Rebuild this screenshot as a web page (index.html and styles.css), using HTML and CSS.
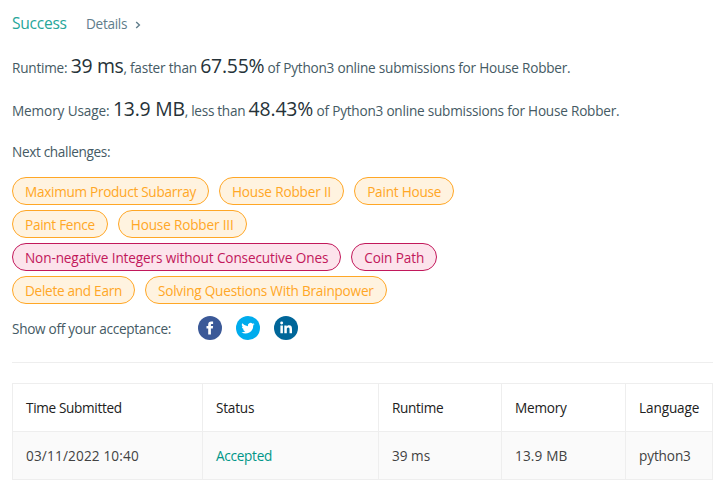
FILE: index.html
```
<!DOCTYPE html>
<html lang="en">
<head>
<meta charset="utf-8">
<title>Submission result</title>
<link rel="stylesheet" href="styles.css">
</head>
<body>
<main class="result">
  <header class="heading">
    <span class="success">Success</span>
    <a class="details">Details</a>
    <svg class="chevron" viewBox="0 0 6 8"><path d="M1.2 1 4.4 4 1.2 7"/></svg>
  </header>
  <p class="stat"><span>Runtime: </span><b class="tight">39 ms</b><span>, faster than </span><b>67.55%</b><span> of Python3 online submissions for House Robber.</span></p>
  <p class="stat"><span class="loose">Memory Usage: </span><b>13.9 MB</b><span class="mid">, less than </span><b class="loose">48.43%</b><span> of Python3 online submissions for House Robber.</span></p>
  <p class="next tight">Next challenges:</p>
  <section class="challenges">
    <div class="row"><a class="pill mid">Maximum Product Subarray</a><a class="pill near">House Robber II</a><a class="pill">Paint House</a></div>
    <div class="row"><a class="pill mid">Paint Fence</a><a class="pill near">House Robber III</a></div>
    <div class="row"><a class="pill hard loose">Non-negative Integers without Consecutive Ones</a><a class="pill hard loose">Coin Path</a></div>
    <div class="row"><a class="pill mid">Delete and Earn</a><a class="pill">Solving Questions With Brainpower</a></div>
  </section>
  <div class="share">
    <span class="share-label mid">Show off your acceptance:</span>
    <svg class="social" viewBox="0 0 24 24"><circle cx="12" cy="12" r="12" fill="#3b5998"/><path fill="#fff" d="M10.2 18.5v-6H8.500v-2.400h1.700V8.600c0-2 1.100-3 3-3h1.900V8h-1.200c-.8 0-1 .4-1 1.100v1h2.200l-.3 2.400h-1.900v6z"/></svg>
    <svg class="social" viewBox="0 0 24 24"><circle cx="12" cy="12" r="12" fill="#00aced"/><path fill="#fff" d="M18.6 8.100c-.5.2-1 .4-1.600.4.6-.3 1-.9 1.200-1.500-.5.3-1.100.5-1.700.7a2.700 2.700 0 0 0-4.600 2.500A7.700 7.700 0 0 1 6.300 7.300a2.700 2.700 0 0 0 .8 3.600c-.4 0-.8-.1-1.200-.3 0 1.300.9 2.400 2.200 2.700-.4.1-.8.1-1.200 0 .3 1.100 1.300 1.900 2.500 1.900a5.400 5.400 0 0 1-4 1.100 7.700 7.700 0 0 0 11.800-6.800c.6-.4 1-.8 1.400-1.400z"/></svg>
    <svg class="social" viewBox="0 0 24 24"><circle cx="12" cy="12" r="12" fill="#006699"/><path fill="#fff" d="M6.400 9.500h2.500v7.800H6.400zM10.300 9.500h2.400v1.100c.5-.8 1.300-1.300 2.400-1.300 2.400 0 2.900 1.500 2.900 3.600v4.400h-2.500v-3.900c0-1 0-2-1.300-2s-1.400 1-1.400 2v3.900h-2.500z"/><circle cx="7.650" cy="7" r="1.450" fill="#fff"/></svg>
  </div>
  <table class="submissions">
    <thead><tr><th class="c-time tight">Time Submitted</th><th class="c-status">Status</th><th class="c-runtime tight">Runtime</th><th class="c-memory">Memory</th><th class="loose">Language</th></tr></thead>
    <tbody><tr><td class="wide">03/11/2022 10:40</td><td class="accepted mid">Accepted</td><td class="flat">39 ms</td><td class="wide">13.9 MB</td><td class="loose">python3</td></tr></tbody>
  </table>
</main>
</body>
</html>
```
FILE: styles.css
```
* { box-sizing: border-box; }
body {
  margin: 0;
  background: #fff;
  color: #455a64;
  font: 13.6px/20px "Open Sans", "Noto Sans", sans-serif;
  letter-spacing: -.22px;
}
.result { padding: 11px 12px 0; }
.mid { letter-spacing: -.29px; }
.near { letter-spacing: -.17px; }
.tight { letter-spacing: -.34px; }
.loose { letter-spacing: -.12px; }
.flat { letter-spacing: 0; }
.wide { letter-spacing: .16px; }

.heading { display: flex; align-items: baseline; height: 24px; line-height: 24px; }
.success { width: 74px; color: #26a69a; font-size: 15.6px; letter-spacing: -.27px; }
.details { width: 49px; color: #607d8b; letter-spacing: -.31px; }
.chevron { width: 6px; height: 8px; fill: none; stroke: #607d8b; stroke-width: 1.4; }

.stat { height: 43px; margin: 0; line-height: 43px; white-space: pre; }
.heading + .stat { margin-top: 9px; }
.stat b { color: #263238; font-size: 19.4px; font-weight: 400; }
.next { margin: 12px 0 15px; }

.challenges { display: grid; gap: 5px; }
.row { display: flex; gap: 10px; }
.pill {
  height: 28px;
  padding: 0 12px;
  border: 1px solid #ffa726;
  border-radius: 14px;
  background: #fff3e0;
  color: #ffa726;
  line-height: 28px;
  white-space: nowrap;
}
.pill.hard { border-color: #c2185b; background: #fce4ec; color: #c2185b; }

.share {
  display: flex;
  align-items: center;
  gap: 14px;
  box-sizing: content-box;
  height: 24px;
  margin-top: 12px;
  padding-bottom: 22px;
  border-bottom: 1px solid #eee;
}
.share-label { width: 172px; padding-top: 2px; line-height: 24px; }
.social { width: 24px; height: 24px; }

.submissions {
  width: 701px;
  margin-top: 20px;
  border-collapse: collapse;
  table-layout: fixed;
}
.submissions th, .submissions td {
  height: 48px;
  padding: 0 13px;
  border: 1px solid #eee;
  text-align: left;
  font-weight: 400;
  white-space: nowrap;
}
.submissions th { color: #212121; }
.submissions td { background: #fafafa; color: #424242; }
.submissions .accepted { color: #009688; }
.c-time { width: 190px; }
.c-status { width: 176px; }
.c-runtime { width: 123px; }
.c-memory { width: 124px; }
```
